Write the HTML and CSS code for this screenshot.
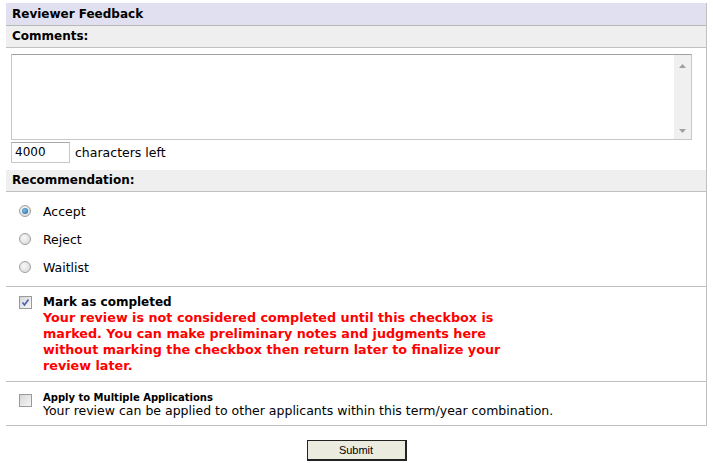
FILE: index.html
```html
<!DOCTYPE html>
<html>
<head>
<meta charset="utf-8">
<link rel="stylesheet" href="styles.css">
</head>
<body>
<div class="panel">
  <div class="title">Reviewer Feedback</div>
  <div class="section-head">Comments:</div>
  <div class="comments">
    <div class="textarea">
      <div class="scrollbar">
        <svg width="7" height="4" viewBox="0 0 7 4"><path d="M0 4 L3.5 0 L7 4 Z" fill="#a0a0a0"/></svg>
        <svg width="7" height="4" viewBox="0 0 7 4"><path d="M0 0 L3.5 4 L7 0 Z" fill="#a0a0a0"/></svg>
      </div>
    </div>
    <div class="counter-row">
      <div class="counter">4000</div>
      <span>characters left</span>
    </div>
  </div>
  <div class="section-head">Recommendation:</div>
  <div class="options">
    <div class="option"><span class="radio checked"></span><span>Accept</span></div>
    <div class="option"><span class="radio"></span><span>Reject</span></div>
    <div class="option"><span class="radio"></span><span>Waitlist</span></div>
  </div>
  <div class="check-row complete">
    <span class="checkbox checked">
      <svg width="9" height="9" viewBox="0 0 9 9"><path d="M1.5 4.5 L3.5 7 L7.5 1.5" fill="none" stroke="#4a5fb0" stroke-width="1.6"/></svg>
    </span>
    <div class="check-text">
      <div class="check-title">Mark as completed</div>
      <div class="warning">Your review is not considered completed until this checkbox is marked. You can make preliminary notes and judgments here without marking the checkbox then return later to finalize your review later.</div>
    </div>
  </div>
  <div class="check-row multi">
    <span class="checkbox"></span>
    <div class="check-text">
      <div class="small-title">Apply to Multiple Applications</div>
      <div class="plain">Your review can be applied to other applicants within this term/year combination.</div>
    </div>
  </div>
</div>
<div class="actions">
  <button class="submit">Submit</button>
</div>
</body>
</html>
```
FILE: styles.css
```css
body {
  margin: 0;
  padding: 3px 6px 0 6px;
  font-family: "DejaVu Sans", Verdana, sans-serif;
  font-size: 12.5px;
  color: #000;
  background: #fff;
}
.panel {
  width: 700px;
  border-right: 1px solid #c0c0c0;
  border-bottom: 1px solid #c0c0c0;
}
.title {
  background: #e0e0f0;
  height: 22px;
  line-height: 22px;
  padding-left: 6px;
  font-weight: bold;
  font-size: 12px;
  border-bottom: 1px solid #b8b8b8;
}
.section-head {
  background: #efefef;
  height: 21px;
  line-height: 21px;
  padding-left: 6px;
  font-weight: bold;
  font-size: 12px;
  border-bottom: 1px solid #c0c0c0;
}
.comments {
  padding: 6px 0 7px 5px;
}
.textarea {
  width: 679px;
  height: 84px;
  border: 1px solid #c8c8c8;
  border-top-color: #a0a0a0;
  display: flex;
  justify-content: flex-end;
}
.scrollbar {
  width: 17px;
  background: #f0f0f0;
  display: flex;
  flex-direction: column;
  justify-content: space-between;
  align-items: center;
  padding: 9px 0 6px;
}
.counter-row {
  display: flex;
  align-items: center;
  gap: 5px;
  margin-top: 2px;
}
.counter {
  width: 54px;
  height: 19px;
  line-height: 18px;
  border: 1px solid #c8c8c8;
  border-top-color: #a8a8a8;
  padding-left: 3px;
  font-size: 12px;
}
.options {
  padding: 5px 0 5px 13px;
  display: flex;
  flex-direction: column;
  border-bottom: 1px solid #c0c0c0;
}
.option {
  display: flex;
  align-items: center;
  height: 28px;
  gap: 12px;
}
.radio {
  width: 12px;
  height: 12px;
  border-radius: 50%;
  border: 1px solid #a0a0a0;
  background: radial-gradient(circle at 40% 40%, #f8f8f8, #d4d4d4);
  box-sizing: border-box;
  position: relative;
}
.radio.checked::after {
  content: "";
  position: absolute;
  left: 2px;
  top: 2px;
  width: 6px;
  height: 6px;
  border-radius: 50%;
  background: radial-gradient(circle at 40% 40%, #7ec0e8, #1a5c98);
}
.check-row {
  display: flex;
  align-items: flex-start;
  padding-left: 13px;
  gap: 11px;
  border-bottom: 1px solid #c0c0c0;
}
.complete {
  padding-top: 7px;
  height: 87px;
}
.multi {
  padding-top: 10px;
  height: 33px;
  border-bottom: none;
}
.checkbox {
  width: 13px;
  height: 13px;
  box-sizing: border-box;
  border: 1px solid #9a9a9a;
  background: linear-gradient(135deg, #d8d8d8, #f6f6f6);
  display: flex;
  align-items: center;
  justify-content: center;
  margin-top: 2px;
  flex: none;
}
.check-title {
  font-weight: bold;
  font-size: 12px;
  line-height: 16px;
}
.warning {
  color: #ff0000;
  font-weight: bold;
  font-size: 12.75px;
  line-height: 16px;
  width: 470px;
}
.small-title {
  font-weight: bold;
  font-size: 10px;
  line-height: 11px;
}
.plain {
  line-height: 16px;
}
.actions {
  display: flex;
  justify-content: center;
  padding-top: 14px;
}
.submit {
  width: 100px;
  height: 21px;
  font-family: "Liberation Sans", Arial, sans-serif;
  font-size: 11px;
  background: #ecebe0;
  border: 1px solid #222;
  border-right-width: 2px;
  border-bottom-width: 2px;
  padding: 0;
}
```
